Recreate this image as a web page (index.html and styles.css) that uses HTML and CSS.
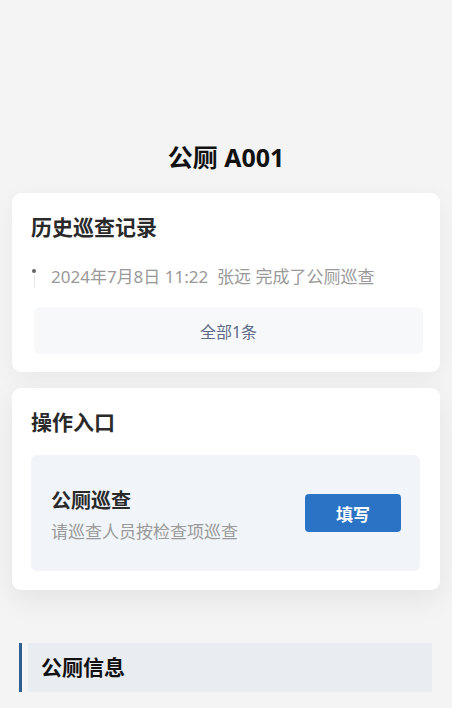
FILE: index.html
```html
<!DOCTYPE html>
<html lang="zh-CN">
<head>
<meta charset="utf-8">
<title>公厕 A001</title>
<link rel="stylesheet" href="styles.css">
</head>
<body>
<div class="page">
  <h1 class="page-title">公厕 A001</h1>

  <section class="card">
    <h2 class="card-title">历史巡查记录</h2>
    <div class="timeline">
      <div class="tl-item">
        <span class="tl-axis"><span class="tl-dot"></span><span class="tl-line"></span></span>
        <span class="tl-text">2024年7月8日 11:22&nbsp; 张远 完成了公厕巡查</span>
      </div>
    </div>
    <button class="more-btn" type="button">全部1条</button>
  </section>

  <section class="card card-ops">
    <h2 class="card-title">操作入口</h2>
    <div class="op-box">
      <div class="op-info">
        <div class="op-name">公厕巡查</div>
        <div class="op-desc">请巡查人员按检查项巡查</div>
      </div>
      <button class="op-btn" type="button">填写</button>
    </div>
  </section>

  <div class="section-head">
    <span class="section-bar"></span>
    <div class="section-label">公厕信息</div>
  </div>
</div>
</body>
</html>
```

FILE: styles.css
```css
* { box-sizing: border-box; }
html, body {
  margin: 0;
  padding: 0;
  background: #f4f4f4;
  font-family: "Noto Sans", "Noto Sans CJK SC", sans-serif;
}
.page {
  display: flex;
  flex-direction: column;
  padding: 141px 12px 0;
}
.page-title {
  margin: 0;
  text-align: center;
  font-size: 25px;
  line-height: 32px;
  font-weight: 700;
  color: #111;
}
.card {
  margin-top: 20px;
  background: #fff;
  border-radius: 9px;
  padding: 20px 19px 18px;
  box-shadow: 0 6px 24px rgba(0, 0, 0, 0.05);
}
.card-ops {
  margin-top: 16px;
  padding-bottom: 19px;
  box-shadow: 0 10px 30px rgba(0, 0, 0, 0.07);
}
.card-title {
  margin: 0;
  font-size: 21px;
  line-height: 28px;
  font-weight: 700;
  color: #2a2a2a;
}
.timeline {
  margin-top: 24px;
}
.tl-item {
  display: flex;
  align-items: flex-start;
}
.tl-axis {
  width: 20px;
  display: flex;
  flex-direction: column;
  align-items: flex-start;
  padding-left: 1px;
  padding-top: 4px;
}
.tl-dot {
  width: 4px;
  height: 4px;
  border-radius: 50%;
  background: #666;
}
.tl-line {
  width: 1px;
  height: 12px;
  margin-left: 1.5px;
  margin-top: 2px;
  background: #e6e6e6;
}
.tl-text {
  font-size: 17px;
  line-height: 24px;
  color: #999;
}
.more-btn {
  display: block;
  width: calc(100% - 1px);
  margin: 18px 0 0 3px;
  height: 47px;
  border: 0;
  border-radius: 6px;
  background: #f7f8fa;
  font-family: inherit;
  font-size: 16px;
  color: #5e6b86;
}
.op-box {
  margin-top: 19px;
  margin-right: 1px;
  height: 116px;
  border-radius: 6px;
  background: #f1f4f8;
  display: flex;
  align-items: center;
  justify-content: space-between;
  padding: 5px 19px 0 20px;
}
.op-name {
  font-size: 20px;
  line-height: 28px;
  font-weight: 700;
  color: #2a2a2a;
}
.op-desc {
  margin-top: 5px;
  font-size: 17px;
  line-height: 24px;
  color: #9a9a9a;
}
.op-btn {
  width: 96px;
  height: 38px;
  margin-top: -5px;
  border: 0;
  border-radius: 4px;
  background: #2a73c5;
  color: #fff;
  font-family: inherit;
  font-size: 17px;
  font-weight: 700;
}
.section-head {
  margin: 53px 8px 0 7px;
  display: flex;
  height: 49px;
}
.section-bar {
  width: 3px;
  background: #2f5e93;
  margin-right: 6px;
}
.section-label {
  flex: 1;
  background: #e9ecf1;
  padding-left: 13px;
  font-size: 21px;
  line-height: 49px;
  font-weight: 700;
  color: #111;
}
```
